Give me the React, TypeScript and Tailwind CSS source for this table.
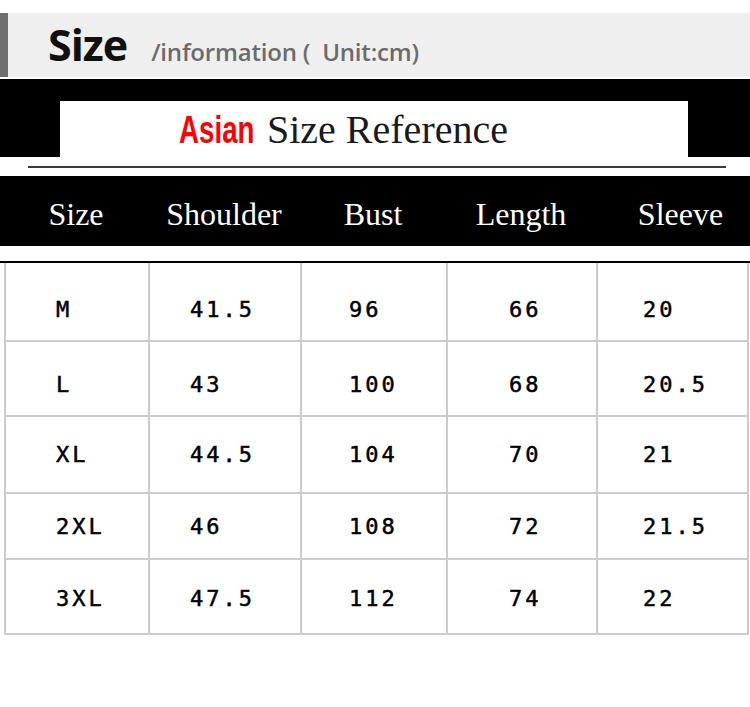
const cols = [
  { label: 'Size', pad: 'pl-[50px]', width: 'w-[144px]' },
  { label: 'Shoulder', pad: 'pl-[40px]', width: 'w-[152px]' },
  { label: 'Bust', pad: 'pl-[47px]', width: 'w-[146px]' },
  { label: 'Length', pad: 'pl-[61px]', width: 'w-[150px]' },
  { label: 'Sleeve', pad: 'pl-[45px]', width: 'w-[151px]' },
]

// row heights and a small downward nudge of the text, as in the source image
const rows = [
  { h: 'h-[79px]', nudge: 'pt-[16px]', cells: ['M', '41.5', '96', '66', '20'] },
  { h: 'h-[75px]', nudge: 'pt-[12px]', cells: ['L', '43', '100', '68', '20.5'] },
  { h: 'h-[77px]', nudge: 'pt-[0px]', cells: ['XL', '44.5', '104', '70', '21'] },
  { h: 'h-[66px]', nudge: 'pt-[1px]', cells: ['2XL', '46', '108', '72', '21.5'] },
  { h: 'h-[75px]', nudge: 'pt-[4px]', cells: ['3XL', '47.5', '112', '74', '22'] },
]

export default function App() {
  return (
    <div className="w-[750px] h-[707px] bg-white overflow-hidden">
      {/* Title bar */}
      <div className="pt-[13px]">
        <div className="flex h-[64px] bg-[#efefef]">
          <div className="w-[8px] bg-[#6f6f6f]" />
          <div className="flex items-baseline pl-[40px] pt-[4px]">
            <span className="text-[43px] font-bold text-[#111] leading-[56px] font-['Open_Sans',sans-serif] tracking-[-1px]">
              Size
            </span>
            <span className="ml-[24px] text-[24px] font-semibold text-[#6b6b6b] font-['Open_Sans',sans-serif] tracking-[-0.2px]">
              /information (&nbsp;&nbsp;Unit:cm)
            </span>
          </div>
        </div>
      </div>

      {/* Banner */}
      <div className="mt-[2px] bg-black pt-[22px] pl-[60px] pr-[62px]">
        <div className="h-[56px] bg-white flex items-center pl-[119px] pt-[2px]">
          <span className="w-[75px] shrink-0">
            <span className="inline-block origin-left scale-x-[0.73] text-[38px] font-bold text-[#ff0000] font-['Liberation_Sans',sans-serif] leading-none">
              Asian
            </span>
          </span>
          <span className="ml-[13px] text-[40px] text-[#1a1a1a] font-['Liberation_Serif',serif] leading-none">
            Size Reference
          </span>
        </div>
      </div>
      <div className="h-[19px] pt-[9px] pl-[28px] pr-[24px]">
        <div className="h-[2px] bg-[#3a3a3a]" />
      </div>

      {/* Header */}
      <div className="flex h-[70px] bg-black pl-[4px] pt-[5px]">
        {cols.map((c, i) => (
          <div
            key={c.label}
            className={`${c.width} flex items-center justify-center text-white text-[32px] font-['Liberation_Serif',serif] ${i === 4 ? 'pl-[18px]' : ''}`}
          >
            {c.label}
          </div>
        ))}
      </div>
      <div className="h-[15px]" />
      <div className="h-[2px] bg-black" />

      {/* Table */}
      <div className="ml-[4px] w-[745px] border-l-2 border-[#cccccc]">
        {rows.map((r, ri) => (
          <div key={ri} className={`flex ${r.h} border-b-2 border-[#cccccc]`}>
            {r.cells.map((v, ci) => (
              <div
                key={ci}
                className={`${cols[ci].width} ${cols[ci].pad} ${r.nudge} ${ci === 0 ? 'w-[142px]' : ''} flex items-center border-r-2 border-[#cccccc] text-[22px] tracking-[3px] text-black [-webkit-text-stroke:0.5px_black] font-['DejaVu_Sans_Mono',monospace]`}
              >
                {v}
              </div>
            ))}
          </div>
        ))}
      </div>
    </div>
  )
}
